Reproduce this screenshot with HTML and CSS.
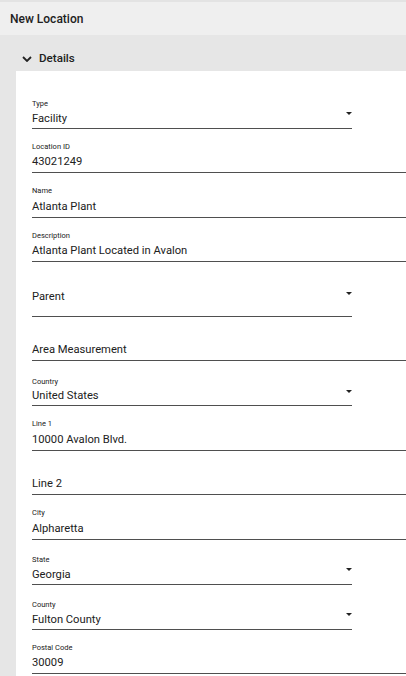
FILE: index.html
```html
<!DOCTYPE html>
<html>
<head>
<meta charset="utf-8">
<link rel="stylesheet" href="styles.css">
</head>
<body>
<div class="header"><span class="title">New Location</span></div>
<div class="section">
  <div class="section-head">
    <svg class="chevron" width="10" height="6" viewBox="0 0 10 6"><path d="M1 1 L5 5 L9 1" fill="none" stroke="#222" stroke-width="1.8"/></svg>
    <span class="section-title">Details</span>
  </div>
  <div class="card">
    <div class="field select">
      <div class="label">Type</div>
      <div class="value-row"><span class="value">Facility</span><span class="arrow"></span></div>
    </div>
    <div class="field">
      <div class="label">Location ID</div>
      <div class="value">43021249</div>
    </div>
    <div class="field">
      <div class="label">Name</div>
      <div class="value">Atlanta Plant</div>
    </div>
    <div class="field">
      <div class="label">Description</div>
      <div class="value">Atlanta Plant Located in Avalon</div>
    </div>
    <div class="field select empty">
      <div class="label"></div>
      <div class="value-row"><span class="value">Parent</span><span class="arrow"></span></div>
    </div>
    <div class="field">
      <div class="label"></div>
      <div class="value">Area Measurement</div>
    </div>
    <div class="field select">
      <div class="label">Country</div>
      <div class="value-row"><span class="value">United States</span><span class="arrow"></span></div>
    </div>
    <div class="field">
      <div class="label">Line 1</div>
      <div class="value">10000 Avalon Blvd.</div>
    </div>
    <div class="field">
      <div class="label"></div>
      <div class="value">Line 2</div>
    </div>
    <div class="field">
      <div class="label">City</div>
      <div class="value">Alpharetta</div>
    </div>
    <div class="field select">
      <div class="label">State</div>
      <div class="value-row"><span class="value">Georgia</span><span class="arrow"></span></div>
    </div>
    <div class="field select">
      <div class="label">County</div>
      <div class="value-row"><span class="value">Fulton County</span><span class="arrow"></span></div>
    </div>
    <div class="field">
      <div class="label">Postal Code</div>
      <div class="value">30009</div>
    </div>
  </div>
</div>
</body>
</html>
```
FILE: styles.css
```css
html, body {
  margin: 0;
  padding: 0;
  height: 100%;
  overflow: hidden;
  font-family: Roboto, "Liberation Sans", sans-serif;
  color: #212121;
  background: #e6e6e6;
}

.header {
  height: 33px;
  border-top: 2px solid #e3e3e3;
  background: #efefef;
  display: flex;
  align-items: center;
  padding-left: 10px;
}

.title {
  font-size: 12px;
  line-height: 16px;
  font-weight: 500;
}

.section {
  background: #e6e6e6;
}

.section-head {
  display: flex;
  align-items: center;
  padding: 15px 0 5px 22px;
  height: 16px;
}

.chevron {
  display: block;
  margin-right: 7px;
  margin-top: 1px;
}

.section-title {
  font-size: 11.6px;
  line-height: 16px;
  font-weight: 500;
}

.card {
  margin-left: 16px;
  background: #ffffff;
  padding: 12.5px 0 20px 16px;
  overflow: hidden;
}

.field {
  width: 400px;
  padding-top: 13px;
  padding-bottom: 0;
  border-bottom: 1px solid #4f4f4f;
}

.field.select {
  width: 320px;
  padding-top: 15.5px;
}

.field.select.empty {
  padding-top: 15px;
  padding-bottom: 10px;
}

.label {
  font-size: 7.5px;
  line-height: 10px;
  height: 10px;
}

.value {
  font-size: 11.2px;
  line-height: 20px;
  height: 20px;
  padding-top: 0.5px;
}

.value-row {
  display: flex;
  justify-content: space-between;
  align-items: flex-start;
  height: 18.5px;
}

.value-row .value {
  line-height: 18px;
  height: 18px;
}

.arrow {
  width: 0;
  height: 0;
  border-left: 3px solid transparent;
  border-right: 3px solid transparent;
  border-top: 3px solid #222;
  margin-top: 3px;
}

.empty .arrow {
  margin-top: 5px;
}
```
